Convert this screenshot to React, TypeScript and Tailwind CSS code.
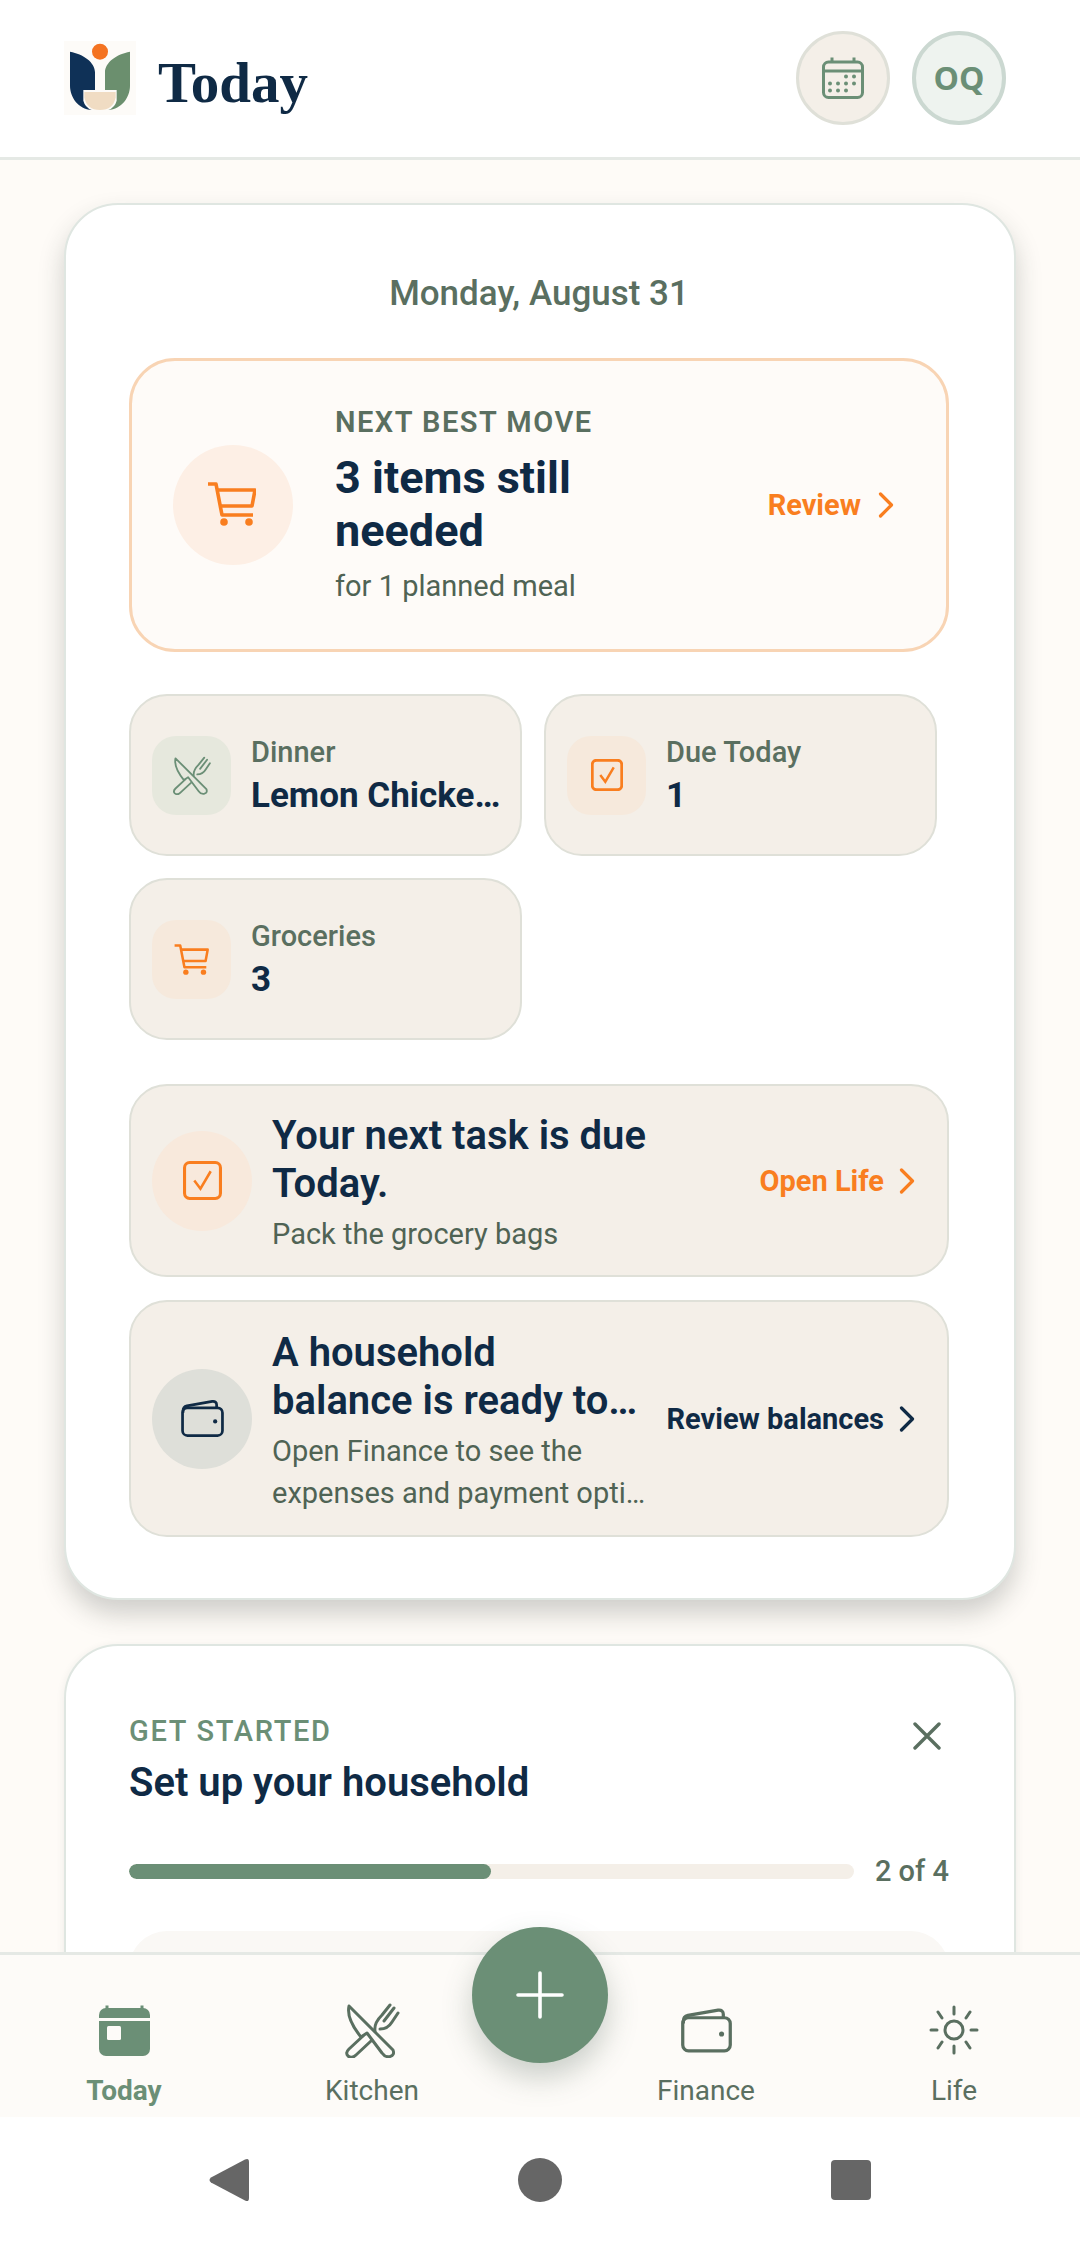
import type { ReactNode } from 'react';

const NAVY = '#0f2a45';

function Logo() {
  return (
    <div className="w-[72px] h-[74px] bg-[#fdfbf8] shrink-0">
      <svg width="72" height="74" viewBox="42 36 216 222">
        <path d="M60 68 C100 75 135 100 135 130 L135 183 L100 183 L100 215 Q105 235 125 243 C85 240 60 205 60 170 Z" fill="#0f3157" />
        <path d="M240 68 C200 75 165 100 165 130 L165 183 L200 183 L200 215 Q195 235 175 243 C215 240 240 205 240 170 Z" fill="#6b8f6e" />
        <path d="M103 189 H197 V205 Q190 243 150 243 Q110 243 103 205 Z" fill="#f0dcc3" />
        <circle cx="150" cy="68" r="24" fill="#f47321" />
      </svg>
    </div>
  );
}

function CalendarDots() {
  return (
    <svg width="42" height="42" viewBox="0 0 42 42" fill="none" stroke="#6b8f76" strokeWidth="3">
      <rect x="1.5" y="5" width="39" height="35.5" rx="5" />
      <path d="M1.5 14 H40.5 M10 0.5 V5 M32 0.5 V5" />
      <g fill="#6b8f76" stroke="none">
        <circle cx="24" cy="19.5" r="2" />
        <circle cx="32" cy="19.5" r="2" />
        <circle cx="8" cy="26.5" r="2" />
        <circle cx="16" cy="26.5" r="2" />
        <circle cx="24" cy="26.5" r="2" />
        <circle cx="32" cy="26.5" r="2" />
        <circle cx="8" cy="33.5" r="2" />
        <circle cx="16" cy="33.5" r="2" />
        <circle cx="24" cy="33.5" r="2" />
      </g>
    </svg>
  );
}

function Cart({ w, h, sw }: { w: number; h: number; sw: number }) {
  return (
    <svg width={w} height={h} viewBox="0 0 48 44" fill="none" stroke="#f97e1f" strokeWidth={sw} strokeLinejoin="round">
      <path d="M0 2 H8 L14 33 H45" />
      <path d="M9 8 H47 L44 24 H12" />
      <g fill="#f97e1f" stroke="none">
        <circle cx="16" cy="40" r="3.8" />
        <circle cx="41" cy="40" r="3.8" />
      </g>
    </svg>
  );
}

function CheckBox({ size, sw }: { size: number; sw: number }) {
  return (
    <svg width={size} height={size} viewBox="0 0 38 38" fill="none" stroke="#f97e1f" strokeWidth={sw}>
      <rect x="1.5" y="1.5" width="35" height="35" rx="5" />
      <path d="M11 19 L17 27 L27 10" strokeWidth={sw - 0.5} />
    </svg>
  );
}

function Utensils({ w, h, color, sw }: { w: number; h: number; color: string; sw: number }) {
  return (
    <svg width={w} height={h} viewBox="0 0 57 55" fill="none" stroke={color} strokeWidth={sw} strokeLinejoin="round" strokeLinecap="round">
      <path d="M5 3 L33 31 L49 47 Q51 52 46 53.5 Q41 54.5 38 50 L23 30 L17 34 C8 23 3 12 5 3 Z" />
      <path d="M19 33 L5 46 Q1 50 4 53 Q8 56 12 52 L27 38" />
      <path d="M31 28 C30 22 33 17 38 12 L46 2 M36 26 C41 26 45 24 48 19 L54 10 M40 18 L50 5" />
    </svg>
  );
}

function Wallet({ w, h, color, sw }: { w: number; h: number; color: string; sw: number }) {
  return (
    <svg width={w} height={h} viewBox="0 0 44 38" fill="none" stroke={color} strokeWidth={sw} strokeLinejoin="round">
      <rect x="1.5" y="8" width="41" height="28.5" rx="5" />
      <path d="M2 13 V11 Q2 7 6 6 L32 1.5 Q36.5 1 36.5 5 V8" />
      <circle cx="35" cy="22" r="2.2" fill={color} stroke="none" />
    </svg>
  );
}

function Sun() {
  return (
    <svg width="50" height="50" viewBox="0 0 50 50" fill="none" stroke="#5a6f60" strokeWidth="3" strokeLinecap="round">
      <circle cx="25" cy="25" r="9" />
      <path d="M25 2 V9 M25 41 V48 M2 25 H8 M42 25 H48 M9 7 L13 13 M41 7 L37 13 M9 43 L13 37 M41 43 L37 37" />
    </svg>
  );
}

function Chevron({ color }: { color: string }) {
  return (
    <svg width="16" height="26" viewBox="0 0 16 26" fill="none" stroke={color} strokeWidth="3.2" strokeLinecap="round" strokeLinejoin="round">
      <path d="M2.5 2 L13.5 13 L2.5 24" />
    </svg>
  );
}

function StatCard({ icon, tile, label, value }: { icon: ReactNode; tile: string; label: string; value: string }) {
  return (
    <div className="h-[162px] flex items-center gap-[20px] pl-[21px] pr-[10px] bg-[#f4efe8] border-2 border-[#dfe0d8] rounded-[38px]">
      <div className={`w-[79px] h-[79px] rounded-[24px] flex items-center justify-center shrink-0 ${tile}`}>{icon}</div>
      <div className="flex-1 min-w-0">
        <div className="text-[29px] leading-[38px] font-medium text-[#5a6f60]">{label}</div>
        <div className="mt-[3px] text-[35px] leading-[44px] font-bold text-[#0f2a45] whitespace-nowrap">{value}</div>
      </div>
    </div>
  );
}

function ActionRow({ circle, icon, title, sub, action, actionColor, height }: {
  circle: string;
  icon: ReactNode;
  title: string;
  sub: string;
  action: string;
  actionColor: string;
  height: string;
}) {
  return (
    <div className={`flex items-center pl-[21px] pr-[32px] bg-[#f4efe8] border-2 border-[#dfe0d8] rounded-[38px] ${height}`}>
      <div className={`w-[100px] h-[100px] rounded-full flex items-center justify-center shrink-0 ${circle}`}>{icon}</div>
      <div className="flex-1 min-w-0 ml-[20px] mr-[21px] mt-[5px]">
        <div className="text-[40px] leading-[48px] font-semibold text-[#0f2a45]">{title}</div>
        <div className="mt-[5px] text-[29px] leading-[42px] text-[#4f6354]">{sub}</div>
      </div>
      <div className="flex items-center gap-[15px] shrink-0">
        <span className="text-[29px] leading-[36px] font-bold" style={{ color: actionColor }}>{action}</span>
        <Chevron color={actionColor} />
      </div>
    </div>
  );
}

function NavItem({ icon, label, active }: { icon: ReactNode; label: string; active?: boolean }) {
  return (
    <div className="flex flex-col items-center pt-[47px]">
      <div className="h-[56px] flex items-center justify-center">{icon}</div>
      <div className={`mt-[17px] text-[28px] leading-[32px] ${active ? 'font-bold text-[#6b8f76]' : 'text-[#5a6f60]'}`}>{label}</div>
    </div>
  );
}

export default function App() {
  return (
    <div className="w-[1080px] h-[2242px] flex flex-col bg-white overflow-hidden font-['Roboto',sans-serif]">
      {/* Header */}
      <header className="h-[160px] shrink-0 flex items-center justify-between pl-[64px] pr-[74px] pb-[2px] bg-white border-b-[3px] border-[#e5e9e5]">
        <div className="flex items-center gap-[22px]">
          <Logo />
          <h1 className="mt-[10px] font-['Liberation_Serif',serif] font-bold text-[57px] leading-[64px] text-[#0f2a45]">Today</h1>
        </div>
        <div className="flex items-center gap-[22px]">
          <div className="w-[94px] h-[94px] rounded-full bg-[#f4efe8] border-[3px] border-[#dfe0d8] flex items-center justify-center">
            <CalendarDots />
          </div>
          <div className="w-[94px] h-[94px] rounded-full bg-[#eef3ef] border-[4px] border-[#cbd8d1] flex items-center justify-center font-['Open_Sans',sans-serif] font-bold text-[32px] text-[#6b8f76]">
            OQ
          </div>
        </div>
      </header>

      {/* Scrolling content */}
      <main className="flex-1 min-h-0 overflow-hidden bg-[#fefbf7] px-[64px] pt-[43px]">
        <section className="h-[1397px] bg-white border-2 border-[#dfe6e1] rounded-[54px] pl-[63px] pr-[65px] pt-[67px] shadow-[0_14px_26px_rgba(40,50,45,0.22)]">
          <div className="text-center text-[35px] leading-[44px] font-medium text-[#5a6f60]">Monday, August 31</div>

          <div className="mt-[42px] h-[294px] flex items-center pl-[41px] pr-[52px] bg-[#fefbf8] border-[3px] border-[#f8d4b4] rounded-[46px]">
            <div className="w-[120px] h-[120px] rounded-full bg-[#fdefe5] flex items-center justify-center shrink-0">
              <div className="mb-[2px] mr-[2px]">
                <Cart w={48} h={44} sw={3.6} />
              </div>
            </div>
            <div className="ml-[42px] w-[360px]">
              <div className="text-[29px] leading-[36px] font-semibold tracking-[1.5px] text-[#5a6f60]">NEXT BEST MOVE</div>
              <div className="mt-[11px] text-[45px] leading-[53px] font-bold text-[#0f2a45]">3 items still needed</div>
              <div className="mt-[8px] text-[29px] leading-[42px] text-[#4f6354]">for 1 planned meal</div>
            </div>
            <div className="ml-auto flex items-center gap-[17px]">
              <span className="text-[29px] leading-[36px] font-bold text-[#f97e1f]">Review</span>
              <Chevron color="#f97e1f" />
            </div>
          </div>

          <div className="mt-[42px] grid grid-cols-[393px_393px] gap-[22px]">
            <StatCard tile="bg-[#e6e8dd]" icon={<Utensils w={40} h={39} color="#6b8f76" sw={2.6} />} label="Dinner" value="Lemon Chicke…" />
            <StatCard tile="bg-[#f6e9dc]" icon={<CheckBox size={32} sw={3.4} />} label="Due Today" value="1" />
            <StatCard tile="bg-[#f6e9dc]" icon={<Cart w={35} h={31} sw={3.6} />} label="Groceries" value="3" />
          </div>

          <div className="mt-[44px] flex flex-col gap-[23px]">
            <ActionRow
              height="h-[193px]"
              circle="bg-[#f8e9dc]"
              icon={<CheckBox size={39} sw={3} />}
              title="Your next task is due Today."
              sub="Pack the grocery bags"
              action="Open Life"
              actionColor="#f97e1f"
            />
            <ActionRow
              height="h-[237px]"
              circle="bg-[#dedfd9]"
              icon={<Wallet w={43} h={37} color={NAVY} sw={2.8} />}
              title="A household balance is ready to…"
              sub="Open Finance to see the expenses and payment opti…"
              action="Review balances"
              actionColor={NAVY}
            />
          </div>
        </section>

        <section className="mt-[44px] h-[400px] bg-white border-2 border-[#dfe6e1] rounded-[54px] pl-[63px] pr-[65px] pt-[67px] shadow-[0_2px_8px_rgba(40,50,45,0.08)]">
          <div className="flex justify-between">
            <div>
              <div className="text-[29px] leading-[36px] font-medium tracking-[1.7px] text-[#6b8f76]">GET STARTED</div>
              <div className="mt-[10px] text-[40px] leading-[48px] font-semibold text-[#0f2a45]">Set up your household</div>
            </div>
            <svg className="mt-[9px] mr-[8px]" width="28" height="28" viewBox="0 0 28 28" fill="none" stroke="#5a6f60" strokeWidth="3.4" strokeLinecap="round">
              <path d="M2 2 L26 26 M26 2 L2 26" />
            </svg>
          </div>
          <div className="mt-[44px] flex items-center gap-[21px]">
            <div className="flex-1 h-[15px] rounded-full bg-[#f4efe8] overflow-hidden">
              <div className="h-full w-1/2 rounded-full bg-[#6b8f76]" />
            </div>
            <span className="text-[29px] leading-[40px] font-medium text-[#5a6f60]">2 of 4</span>
          </div>
          <div className="mt-[40px] h-[100px] rounded-[38px] bg-[#faf8f5]" />
        </section>
      </main>

      {/* Bottom nav */}
      <nav className="relative h-[165px] shrink-0 bg-[#fdfbf8] border-t-[3px] border-[#e5e9e5] grid grid-cols-[248px_248px_88px_244px_252px]">
        <NavItem
          active
          label="Today"
          icon={
            <svg width="51" height="51" viewBox="0 0 51 51">
              <path d="M8 5 V0.5 M43 5 V0.5" stroke="#6b8f76" strokeWidth="3" />
              <rect y="3" width="51" height="48" rx="7" fill="#6b8f76" />
              <rect y="13" width="51" height="3" fill="#fdfbf8" />
              <rect x="8" y="21" width="14" height="14" rx="1.5" fill="#fdfbf8" />
            </svg>
          }
        />
        <NavItem label="Kitchen" icon={<Utensils w={57} h={55} color="#5a6f60" sw={3} />} />
        <div />
        <NavItem label="Finance" icon={<Wallet w={51} h={45} color="#5a6f60" sw={2.8} />} />
        <NavItem label="Life" icon={<Sun />} />
        <button className="absolute left-[472px] -top-[28px] w-[136px] h-[136px] rounded-full bg-[#6b8f76] flex items-center justify-center shadow-[0_14px_30px_rgba(70,90,75,0.28)]">
          <svg width="48" height="48" viewBox="0 0 48 48" stroke="#ffffff" strokeWidth="3.6" strokeLinecap="round">
            <path d="M24 2 V46 M2 24 H46" />
          </svg>
        </button>
      </nav>

      {/* Android system bar */}
      <div className="h-[125px] shrink-0 bg-white flex items-center justify-center gap-[269px]">
        <svg width="40" height="44" viewBox="0 0 40 44">
          <path d="M36 1.5 Q40 -0.5 40 4 V40 Q40 44.5 36 42.5 L2 24.5 Q-1 22 2 19.5 Z" fill="#666666" />
        </svg>
        <div className="w-[44px] h-[44px] rounded-full bg-[#666666]" />
        <div className="w-[40px] h-[40px] rounded-[4px] bg-[#666666]" />
      </div>
    </div>
  );
}
